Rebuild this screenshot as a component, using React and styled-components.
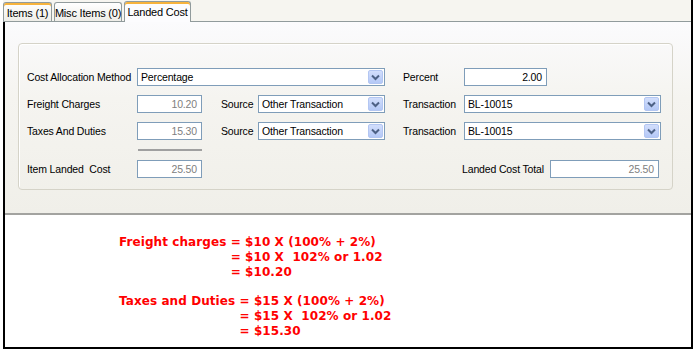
import React from "react";
import styled, { createGlobalStyle } from "styled-components";

const Global = createGlobalStyle`
  * { box-sizing: border-box; }
  body { margin: 0; background: #fff; }
`;

const Page = styled.div`
  width: 697px;
  height: 352px;
  background: #fff;
  padding-left: 3px;
  font-family: "Liberation Sans", Arial, sans-serif;
  font-size: 10.5px;
  letter-spacing: -0.15px;
  color: #000;
`;

const Frame = styled.div`
  width: 690px;
  height: 349px;
  border-right: 2px solid #000;
  border-bottom: 2px solid #000;
  display: flex;
  flex-direction: column;
`;

const TabStrip = styled.div`
  height: 22px;
  display: flex;
  align-items: flex-end;
  gap: 2px;
  background: #f6f5f0;
  border-bottom: 1px solid #919b9c;
`;

const Tab = styled.div`
  height: ${(p) => (p.$active ? "21px" : "19px")};
  margin-bottom: ${(p) => (p.$active ? "-1px" : "0")};
  width: ${(p) => p.$w}px;
  border: 1px solid #919b9c;
  border-bottom: none;
  border-radius: 3px 3px 0 0;
  background: ${(p) =>
    p.$active ? "#fcfcfe" : "linear-gradient(#ffffff, #eeede8)"};
  box-shadow: ${(p) => (p.$hot ? "inset 0 2px 0 #f7b33c" : "none")};
  display: flex;
  align-items: center;
  justify-content: center;
  padding-top: ${(p) => (p.$active ? "0" : "2px")};
  font-size: 11px;
  letter-spacing: -0.2px;
  white-space: nowrap;
`;

const Body = styled.div`
  flex: 1;
  border-left: 2px solid #000;
  display: flex;
  flex-direction: column;
`;

const Panel = styled.div`
  height: 193px;
  background: linear-gradient(#fbfbfd 0%, #f5f4f0 40%, #f0efe9 100%);
  border-bottom: 2px solid #a3a3a0;
  padding: 21px 18px 0 13px;
`;

const GroupBox = styled.div`
  height: 147px;
  border: 1px solid #d5d3c8;
  border-radius: 4px;
  box-shadow: inset 1px 1px 0 #fff;
  padding: 24px 0 0 8px;
`;

const FormGrid = styled.div`
  display: grid;
  grid-template-columns: 110px 65px 56px 127px 79px 197px;
  grid-template-rows: 18px 18px 18px 2px 18px;
  row-gap: 9px;
  align-items: center;
`;

const Label = styled.div`
  padding-left: ${(p) => p.$indent || 0}px;
  white-space: pre;
  grid-row: ${(p) => p.$row || "auto"};
`;

const Field = styled.div`
  height: 18px;
  border: 1px solid #7f9db9;
  background: #fff;
  display: flex;
  align-items: center;
  justify-content: ${(p) => (p.$num ? "flex-end" : "flex-start")};
  padding: ${(p) => (p.$num ? "0 4px 0 0" : "0 1px 0 3px")};
  color: ${(p) => (p.$dim ? "#808080" : "#000")};
  width: ${(p) => (p.$w ? `${p.$w}px` : "auto")};
  flex: ${(p) => (p.$w ? "none" : "1")};
  grid-column: ${(p) => p.$span || "auto"};
  grid-row: ${(p) => p.$row || "auto"};
`;

const FieldText = styled.span`
  flex: 1;
`;

const DropBtn = styled.div`
  width: 15px;
  height: 14px;
  border-radius: 2px;
  background: linear-gradient(#d2defc, #b4c8f6);
  border: 1px solid #b3c6f2;
  display: flex;
  align-items: center;
  justify-content: center;
`;

const Separator = styled.div`
  grid-column: 2;
  grid-row: 4;
  height: 2px;
  background: #a0a0a0;
  margin-left: 1px;
`;

const TotalCell = styled.div`
  grid-column: 6;
  grid-row: 5;
  display: flex;
  align-items: center;
  gap: 6px;
  margin-left: -2px;
  margin-right: 2px;
`;

const Notes = styled.div`
  padding: 20px 0 0 114px;
  font-family: "DejaVu Sans", Verdana, sans-serif;
  font-weight: bold;
  font-size: 12px;
  letter-spacing: 0.08px;
  line-height: 15px;
  color: #ff0000;
  display: flex;
  flex-direction: column;
  gap: 14px;
`;

const Formula = styled.div`
  display: grid;
  grid-template-columns: auto auto;
  justify-content: start;
  white-space: pre;
`;

const Chevron = () => (
  <svg width="9" height="7" viewBox="0 0 9 7">
    <path d="M1 1.5 L4.5 5 L8 1.5" fill="none" stroke="#4d6185" strokeWidth="2" />
  </svg>
);

const Select = ({ children, span }) => (
  <Field $span={span}>
    <FieldText>{children}</FieldText>
    <DropBtn>
      <Chevron />
    </DropBtn>
  </Field>
);

const Block = ({ label, lines }) => (
  <Formula>
    <span>{label}</span>
    <span>{lines[0]}</span>
    {lines.slice(1).map((l, i) => (
      <React.Fragment key={i}>
        <span />
        <span>{l}</span>
      </React.Fragment>
    ))}
  </Formula>
);

export default function App() {
  return (
    <Page>
      <Global />
      <Frame>
        <TabStrip>
          <Tab $w={49} $hot>Items (1)</Tab>
          <Tab $w={68}>Misc Items (0)</Tab>
          <Tab $w={67} $active $hot>Landed Cost</Tab>
        </TabStrip>
        <Body>
          <Panel>
            <GroupBox>
              <FormGrid>
                <Label>Cost Allocation Method</Label>
                <Select span="2 / span 3">Percentage</Select>
                <Label $indent={18}>Percent</Label>
                <Field $num $w={83}>2.00</Field>

                <Label>Freight Charges</Label>
                <Field $num $dim>10.20</Field>
                <Label $indent={19}>Source</Label>
                <Select>Other Transaction</Select>
                <Label $indent={18}>Transaction</Label>
                <Select>BL-10015</Select>

                <Label>Taxes And Duties</Label>
                <Field $num $dim>15.30</Field>
                <Label $indent={19}>Source</Label>
                <Select>Other Transaction</Select>
                <Label $indent={18}>Transaction</Label>
                <Select>BL-10015</Select>

                <Separator />

                <Label $row={5}>{"Item Landed  Cost"}</Label>
                <Field $num $dim $row={5}>25.50</Field>
                <TotalCell>
                  <Label>Landed Cost Total</Label>
                  <Field $num $dim>25.50</Field>
                </TotalCell>
              </FormGrid>
            </GroupBox>
          </Panel>
          <Notes>
            <Block
              label="Freight charges "
              lines={["= $10 X (100% + 2%)", "= $10 X  102% or 1.02", "= $10.20"]}
            />
            <Block
              label="Taxes and Duties "
              lines={["= $15 X (100% + 2%)", "= $15 X  102% or 1.02", "= $15.30"]}
            />
          </Notes>
        </Body>
      </Frame>
    </Page>
  );
}
